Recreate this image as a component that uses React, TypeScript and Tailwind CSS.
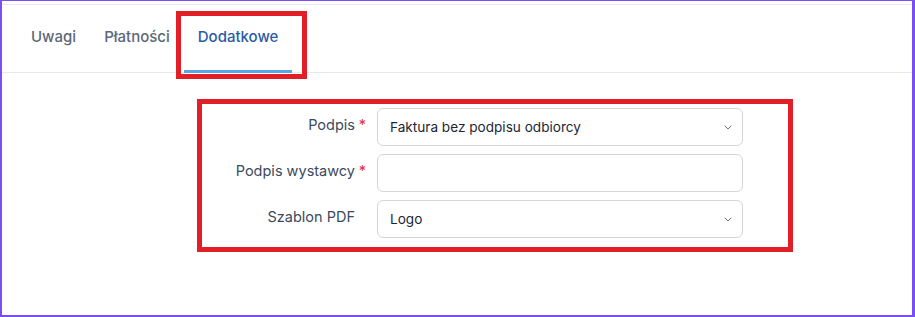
import React from 'react';

const Chevron = () => (
  <svg width="8" height="5" viewBox="0 0 8 5" fill="none" className="text-[#6b7280]">
    <path d="M1 1l3 3 3-3" stroke="currentColor" strokeWidth="1" strokeLinecap="round" strokeLinejoin="round" />
  </svg>
);

const tabs = ['Uwagi', 'Płatności', 'Dodatkowe'];

const App: React.FC = () => {
  return (
    <div
      className="w-[915px] h-[317px] bg-white border-l-2 border-r-[3px] border-t border-b-2 border-[#7a4ff2] overflow-hidden"
      style={{ fontFamily: 'Inter, "Noto Sans", sans-serif' }}
    >
      <div className="mt-[3px] border-t border-[#e6ebf1]">
        {/* Tabs */}
        <div className="flex pl-[15px] border-b border-[#e6e9ee] h-[68px]">
          {tabs.map((t) => {
            const active = t === 'Dodatkowe';
            return (
              <div
                key={t}
                className={
                  active
                    ? 'relative flex items-center px-[14px] text-[15px] font-medium text-[#2c5ba5] border-b-[3px] border-[#5ca3e6] -mb-px'
                    : 'relative flex items-center px-[14px] text-[15px] font-medium text-[#5c6878] pb-[2px]'
                }
              >
                <span>{t}</span>
                {active && (
                  <div className="absolute left-[-8px] right-[-15px] top-[6px] bottom-[-9px] border-[5px] border-[#e21f26]" />
                )}
              </div>
            );
          })}
        </div>

        {/* Form */}
        <div className="mt-[26px] ml-[195px] w-[596px] border-[5px] border-[#e21f26] pt-[4px] pb-[9px] pr-[45px]">
          <div className="grid grid-cols-[164px_1fr] gap-x-[11px] gap-y-[8px]">
            <div className="flex justify-end items-center pb-[4px] text-[14.5px] text-[#3c4a5d]">
              <span>Podpis</span>
              <span className="w-[11px] text-right text-[#d7363e]">*</span>
            </div>
            <div className="h-[38px] rounded-[6px] border border-[#d3d7dc] flex items-center justify-between pl-[12px] pr-[10px] text-[13.6px] text-[#1c2636]">
              <span>Faktura bez podpisu odbiorcy</span>
              <Chevron />
            </div>

            <div className="flex justify-end items-center pb-[4px] text-[14.5px] text-[#3c4a5d]">
              <span>Podpis wystawcy</span>
              <span className="w-[11px] text-right text-[#d7363e]">*</span>
            </div>
            <div className="h-[38px] rounded-[6px] border border-[#d3d7dc]" />

            <div className="flex justify-end items-center pb-[4px] text-[14.5px] text-[#3c4a5d]">
              <span>Szablon PDF</span>
              <span className="w-[11px]" />
            </div>
            <div className="h-[38px] rounded-[6px] border border-[#d3d7dc] flex items-center justify-between pl-[12px] pr-[10px] text-[13.6px] text-[#1c2636]">
              <span>Logo</span>
              <Chevron />
            </div>
          </div>
        </div>
      </div>
    </div>
  );
};

export default App;
